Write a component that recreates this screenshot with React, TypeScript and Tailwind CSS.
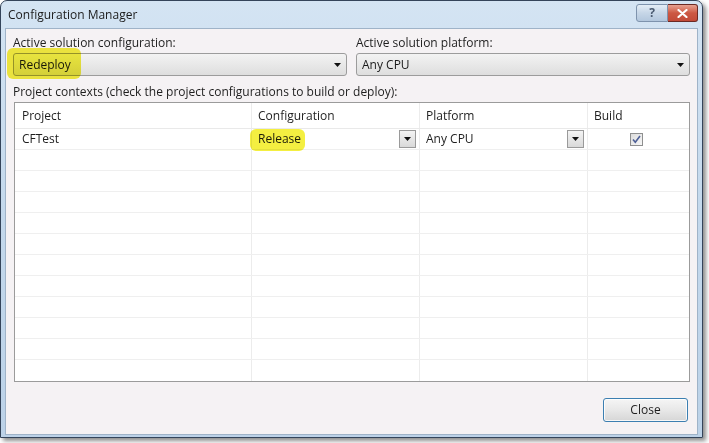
import React from "react";

const font = { fontFamily: '"Open Sans", "Noto Sans", "Liberation Sans", sans-serif' };

function Arrow() {
  return (
    <svg width="7" height="4" viewBox="0 0 7 4" className="block">
      <path d="M0 0h7L3.5 4z" fill="#111" />
    </svg>
  );
}

function Highlight({ className }: { className: string }) {
  return (
    <div
      className={
        "pointer-events-none absolute rounded-[6px] bg-[#f3ee2c] opacity-90 mix-blend-multiply blur-[0.6px] " +
        className
      }
    />
  );
}

function Combo({ value }: { value: string }) {
  return (
    <div className="flex h-[23px] items-center justify-between rounded-[3px] border border-[#9c9c9c] bg-gradient-to-b from-[#f3f3f3] to-[#dedede] pl-[5px] pr-[5px] text-[#1a1a1a]">
      <span>{value}</span>
      <Arrow />
    </div>
  );
}

function CellDrop() {
  return (
    <div className="mr-[3px] flex h-[18px] w-[17px] items-center justify-center border border-[#9a9a9a] bg-gradient-to-b from-[#f4f4f4] to-[#d9d9d9]">
      <Arrow />
    </div>
  );
}

function Checkbox() {
  return (
    <div className="flex h-[13px] w-[13px] items-center justify-center border border-[#8e8f8f] bg-gradient-to-br from-[#dcdcdc] to-[#f7f7f7]">
      <svg width="9" height="9" viewBox="0 0 9 9">
        <path d="M1 4.5l2.3 2.8L8 1" fill="none" stroke="#4d5f96" strokeWidth="1.6" />
      </svg>
    </div>
  );
}

const cols = "grid grid-cols-[237px_168px_168px_1fr]";

export default function App() {
  const emptyRows = Array.from({ length: 11 });
  return (
    <div className="h-[443px] w-[709px] overflow-hidden bg-white text-[12px] leading-[16px]" style={font}>
      <div className="flex h-[438px] w-[703px] flex-col rounded-t-[7px] border border-[#34445a] bg-gradient-to-b from-[#d4e4f3] via-[#c3d8ec] to-[#bcd2e8] shadow-[3px_3px_4px_rgba(0,0,0,0.45)]">
        {/* title bar */}
        <div className="flex h-[27px] shrink-0 items-start justify-between pl-[7px] pr-[4px]">
          <span className="mt-[6px] text-[#1b1b1b]">Configuration Manager</span>
          <div className="mt-[3px] flex">
            <div className="flex h-[18px] w-[32px] items-center justify-center rounded-l-[3px] border border-[#7e93ad] bg-gradient-to-b from-[#e4edf6] via-[#c6d6e7] to-[#b3c7dd] text-[12px] font-bold leading-none text-[#4a5a70]">
              ?
            </div>
            <div className="flex h-[18px] w-[30px] items-center justify-center rounded-r-[3px] border border-l-0 border-[#6b2a24] bg-gradient-to-b from-[#e7a191] via-[#cc5843] to-[#c24a38]">
              <svg width="11" height="9" viewBox="0 0 11 9">
                <path d="M1.5 1l8 7M9.5 1l-8 7" stroke="#fff" strokeWidth="2.2" strokeLinecap="round" />
              </svg>
            </div>
          </div>
        </div>

        {/* body */}
        <div className="mb-[2px] ml-[4px] mr-[4px] flex flex-1 flex-col border border-[#9fb3c8] bg-[#f5f2f4] px-[7px] pt-[6px] text-[#1e1e1e]">
          <div className="grid grid-cols-2 gap-x-[9px]">
            <div className="relative flex flex-col gap-[2px]">
              <span>Active solution configuration:</span>
              <Combo value="Redeploy" />
              <Highlight className="left-[-6px] top-[13px] h-[31px] w-[74px]" />
            </div>
            <div className="flex flex-col gap-[2px]">
              <span>Active solution platform:</span>
              <Combo value="Any CPU" />
            </div>
          </div>

          <div className="mt-[8px]">Project contexts (check the project configurations to build or deploy):</div>

          <div className="ml-[1px] mt-[2px] border border-[#9b9b9b] bg-white">
            <div className={cols + " h-[26px] border-b border-[#e9e9e9]"}>
              <div className="flex items-center border-r border-[#ececec] pl-[7px]">Project</div>
              <div className="flex items-center border-r border-[#ececec] pl-[6px]">Configuration</div>
              <div className="flex items-center border-r border-[#ececec] pl-[6px]">Platform</div>
              <div className="flex items-center pl-[6px]">Build</div>
            </div>
            <div className={cols + " h-[21px] border-b border-[#efefef]"}>
              <div className="flex items-center border-r border-[#ececec] pl-[7px]">CFTest</div>
              <div className="relative flex items-center justify-between border-r border-[#ececec] pl-[6px]">
                <span>Release</span>
                <CellDrop />
                <Highlight className="left-[-2px] top-0 h-[22px] w-[55px] rounded-[3px]" />
              </div>
              <div className="flex items-center justify-between border-r border-[#ececec] pl-[6px]">
                <span>Any CPU</span>
                <CellDrop />
              </div>
              <div className="flex items-center justify-center pr-[4px]">
                <Checkbox />
              </div>
            </div>
            {emptyRows.map((_, i) => (
              <div key={i} className={cols + " h-[21px] " + (i < 10 ? "border-b border-[#efefef]" : "")}>
                <div className="border-r border-[#ececec]" />
                <div className="border-r border-[#ececec]" />
                <div className="border-r border-[#ececec]" />
                <div />
              </div>
            ))}
          </div>

          <div className="mt-[16px] flex justify-end pr-[2px]">
            <button className="h-[24px] w-[85px] rounded-[3px] border border-[#3c7fb1] bg-gradient-to-b from-[#f5f5f5] via-[#e8e8e8] to-[#d6d6d6] text-[#1e1e1e] shadow-[inset_0_0_0_1px_rgba(255,255,255,0.8)]">
              Close
            </button>
          </div>
        </div>
      </div>
    </div>
  );
}
